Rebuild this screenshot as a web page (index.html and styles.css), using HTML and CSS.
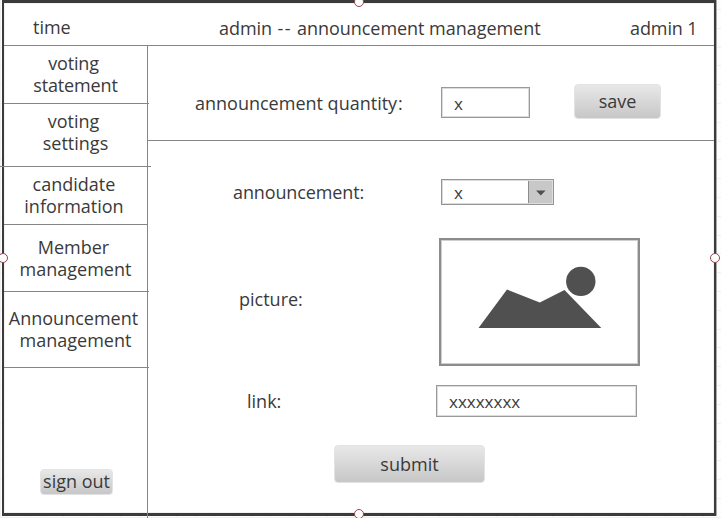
FILE: index.html
```html
<!DOCTYPE html>
<html lang="en">
<head>
<meta charset="utf-8">
<title>admin -- announcement management</title>
<link rel="stylesheet" href="styles.css">
</head>
<body>
<div class="canvas">
  <div class="board">
    <header class="header">
      <span class="time">time</span>
      <span class="title">admin <span class="dashes">--</span> announcement management</span>
      <span class="user">admin 1</span>
    </header>
    <div class="body">
      <nav class="sidebar">
        <a class="item item-statement"><span class="lead">voting</span><span>statement</span></a>
        <a class="item item-settings"><span class="lead">voting</span><span>settings</span></a>
        <a class="item item-candidate"><span>candidate</span><span>information</span></a>
        <a class="item item-member"><span class="lead">Member</span><span class="wide">management</span></a>
        <a class="item item-announcement"><span class="lead">Announcement</span><span class="wide">management</span></a>
        <button class="button sign-out">sign out</button>
      </nav>
      <main class="main">
        <section class="quantity">
          <span class="label label-quantity">announcement quantity<span class="colon">:</span></span>
          <div class="input input-quantity">x</div>
          <button class="button save">save</button>
        </section>
        <section class="form">
          <div class="row row-announcement">
            <span class="label label-announcement">announcement:</span>
            <div class="select"><span class="value">x</span><span class="toggle"><svg width="10" height="6" viewBox="0 0 10 6"><path d="M0 .5H9.6L4.8 5.6Z" fill="#4f4f4f"/></svg></span></div>
          </div>
          <div class="row row-picture">
            <span class="label label-picture">picture:</span>
            <div class="picture"><svg width="195" height="122" viewBox="442 241 195 122"><path d="M478.500 328L507 289.500L539.800 302.500L564.500 290L601.300 328Z" fill="#505050"/><circle cx="580.800" cy="281.400" r="14.700" fill="#505050"/></svg></div>
          </div>
          <div class="row row-link">
            <span class="label label-link">link:</span>
            <div class="input input-link">xxxxxxxx</div>
          </div>
          <button class="button submit">submit</button>
        </section>
      </main>
    </div>
  </div>
  <i class="handle handle-top"></i>
  <i class="handle handle-left"></i>
  <i class="handle handle-right"></i>
  <i class="handle handle-bottom"></i>
</div>
</body>
</html>
```

FILE: styles.css
```css
* { box-sizing: border-box; }
body {
  margin: 0;
  overflow: hidden;
  color: #3a3a3a;
  font: 18px/22px "Open Sans", "Noto Sans", sans-serif;
}
.canvas {
  position: relative;
  width: 721px;
  height: 518px;
  padding: 0 5px 2px 2px;
  overflow: hidden;
  background:
    repeating-linear-gradient(#f0f0f0 0 1px, transparent 1px 18.8px) 0 9px,
    repeating-linear-gradient(90deg, #f0f0f0 0 1px, transparent 1px 18.8px) 7px 0,
    #fdfdfd;
}
.board {
  width: 714px;
  height: 516px;
  background: #fff;
  border: solid #3b3b3b;
  border-width: 3px 2px;
  box-shadow: inset 0 0 0 1px #f2f2f2, inset 0 -1px #f2f2f2, 1px 0 #aaa;
}
.header {
  display: flex;
  height: 43px;
  border-bottom: 1px solid #858585;
  padding-top: 14px;
}
.time { width: 215px; padding-left: 29px; margin-top: -1px; }
.title { width: 411px; white-space: nowrap; letter-spacing: -0.04px; }
.dashes { letter-spacing: 1.6px; margin: 0 0.2px 0 0.7px; }
.user { white-space: nowrap; letter-spacing: -0.1px; }
.body { display: flex; height: 467px; }
.sidebar {
  position: relative;
  width: 144px;
  border-right: 1px solid #858585;
}
.sidebar::after {
  content: "";
  position: absolute;
  left: 143px;
  top: 0;
  width: 1px;
  height: 473px;
  background: #858585;
}
.item {
  position: relative;
  display: flex;
  flex-direction: column;
  align-items: center;
  border-bottom: 1px solid #858585;
}
.item::after {
  content: "";
  position: absolute;
  left: 0;
  bottom: -1px;
  width: 145px;
  height: 1px;
  background: #858585;
}
.item-statement { height: 58px; padding-top: 6px; letter-spacing: -0.15px; }
.item-settings { height: 63px; padding-top: 6px; }
.item-settings::after { left: -4px; width: 151px; }
.item-candidate { height: 58px; padding: 6px 3px 0 0; }
.item-candidate::after { width: 143px; }
.item-member { height: 67px; padding-top: 11px; }
.item-announcement { height: 76px; padding-top: 15px; }
.lead { margin-left: -4px; }
.button {
  display: block;
  padding: 0;
  border: 1px solid #e3e3e3;
  border-radius: 4px;
  background: linear-gradient(#e8e8e8, #c7c7c7);
  color: #3a3a3a;
  font: inherit;
  text-align: center;
  white-space: nowrap;
}
.sign-out { width: 73px; height: 26px; margin: 101px 0 0 36px; padding-bottom: 2px; }
.main { width: 566px; }
.quantity {
  display: flex;
  height: 95px;
  padding-left: 47px;
  border-bottom: 1px solid #858585;
}
.label { flex: none; white-space: nowrap; }
.label-quantity { width: 246px; margin-top: 46px; }
.colon { margin-left: 1px; }
.input {
  height: 31px;
  border: 1px solid #999;
  outline: 1px solid #dcdcdc;
  outline-offset: -2px;
  padding: 5px 0 0 12px;
  font-size: 17px;
}
.input-quantity { width: 89px; margin-top: 41px; }
.save { width: 87px; height: 35px; margin: 38px 0 0 44px; padding-bottom: 2px; }
.form { padding-top: 38px; }
.row { display: flex; }
.row-announcement { height: 59px; padding-left: 85px; }
.label-announcement { width: 208px; margin-top: 2px; letter-spacing: -0.12px; }
.select {
  display: flex;
  width: 113px;
  height: 26px;
  border: 1px solid #959595;
  outline: 1px solid #dcdcdc;
  outline-offset: -2px;
}
.value { width: 86px; padding: 2px 0 0 12px; font-size: 17px; }
.toggle {
  width: 25px;
  padding: 9px 0 0 7px;
  border-left: 1px solid #8c8c8c;
  background: #c8c8c8;
  line-height: 0;
}
.row-picture { height: 147px; padding-left: 91px; }
.label-picture { width: 200px; margin-top: 50px; }
.picture {
  width: 201px;
  height: 128px;
  border: 2px solid #8c8c8c;
  outline: 1px solid #cfcfcf;
  outline-offset: -3px;
  padding: 1px;
  line-height: 0;
}
.row-link { height: 60px; padding-left: 99px; }
.label-link { width: 189px; margin-top: 5px; }
.input-link { width: 201px; height: 32px; }
.submit { width: 151px; height: 38px; margin-left: 186px; }
.handle {
  position: absolute;
  width: 10px;
  height: 10px;
  border: 1px solid #98444d;
  border-radius: 50%;
  background: #fff;
}
.handle-top { left: 354px; top: -3px; }
.handle-left { left: -2px; top: 253px; }
.handle-right { left: 710px; top: 253px; }
.handle-bottom { left: 354px; top: 509px; }
```
